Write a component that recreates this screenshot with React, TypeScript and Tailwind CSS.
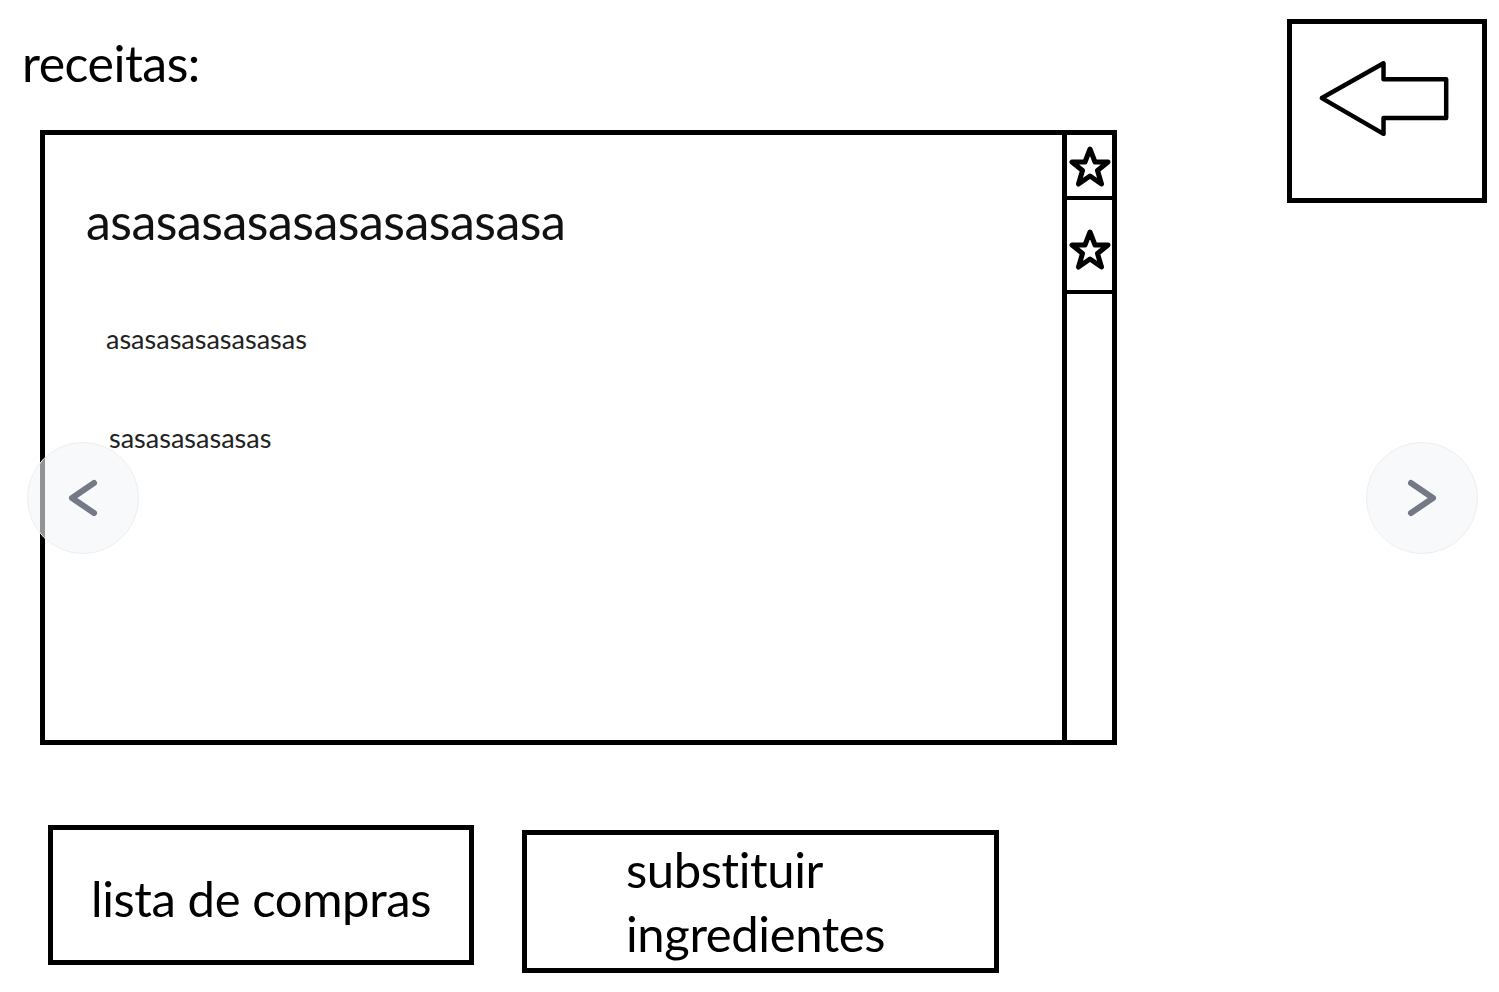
import React from "react";

const font = { fontFamily: "Lato, 'Open Sans', sans-serif" };

// hand-drawn style outlined star
const StarIcon = () => (
  <svg width="42" height="42" viewBox="0 0 42 42">
    <polygon
      points="21,3 26,16 39,16 28.5,24.5 32.5,38 21,30 9.5,38 13.5,24.5 3,16 16,16"
      fill="none"
      stroke="black"
      strokeWidth="5"
      strokeLinejoin="round"
    />
  </svg>
);

const BackArrow = () => (
  <svg width="191" height="175" viewBox="0 0 191 175">
    <polygon
      points="30,74 92,39 92,55 155,55 155,94 92,94 92,110"
      fill="none"
      stroke="black"
      strokeWidth="4.5"
      strokeLinejoin="round"
    />
  </svg>
);

const Chevron = ({ dir }: { dir: "left" | "right" }) => (
  <svg width="34" height="40" viewBox="0 0 34 40">
    <polyline
      points={dir === "left" ? "28,5 6,20 28,35" : "6,5 28,20 6,35"}
      fill="none"
      stroke="#737a86"
      strokeWidth="6"
      strokeLinecap="round"
      strokeLinejoin="round"
    />
  </svg>
);

const NavButton = ({ dir }: { dir: "left" | "right" }) => (
  <button
    className={`absolute top-[442px] w-[112px] h-[112px] rounded-full bg-[#f4f5f6]/60 border border-[#eceef0] flex items-center justify-center ${
      dir === "left" ? "left-[27px]" : "left-[1366px]"
    }`}
  >
    <Chevron dir={dir} />
  </button>
);

export default function App() {
  return (
    <div className="relative w-full h-[992px] bg-white flex text-black overflow-hidden" style={font}>
      {/* left column */}
      <div className="w-[1130px] flex flex-col">
        <h1 className="ml-[22px] mt-[33px] text-[50px] leading-[1.2] font-normal tracking-[-0.5px]">receitas:</h1>

        <div className="mt-[37px] ml-[40px] w-[1077px] h-[615px] border-[5px] border-black flex">
          <div className="flex-1 flex flex-col pl-[41px] pt-[56px]">
            <p className="text-[50px] leading-[1.2] tracking-[-0.5px] text-[#111]">asasasasasasasasasasa</p>
            <p className="mt-[72px] ml-[20px] text-[27px] leading-[1.2] text-[#222]">asasasasasasasas</p>
            <p className="mt-[67px] ml-[23px] text-[27px] leading-[1.2] text-[#222]">sasasasasasas</p>
          </div>
          <div className="w-[50px] border-l-[5px] border-black flex flex-col">
            <div className="h-[65px] border-b-4 border-black flex items-center justify-center pt-[3px]">
              <StarIcon />
            </div>
            <div className="h-[94px] border-b-4 border-black flex items-center justify-center pt-[10px]">
              <StarIcon />
            </div>
          </div>
        </div>

        <div className="mt-[80px] flex items-start">
          <button className="ml-[48px] w-[426px] h-[140px] border-[5px] border-black flex items-center pl-[38px] pt-[6px] text-[49px] leading-[1.2] tracking-[-0.4px]">
            lista de compras
          </button>
          <button className="ml-[48px] mt-[5px] w-[477px] h-[143px] border-[5px] border-black flex flex-col items-start justify-center pl-[99px] pt-[0px] text-[49px] leading-[1.3] tracking-[-0.4px] text-left">
            <span>substituir</span>
            <span>ingredientes</span>
          </button>
        </div>
      </div>

      {/* right column */}
      <div className="flex-1 flex justify-end items-start pt-[19px] pr-[12px]">
        <button className="w-[200px] h-[184px] border-[5px] border-black flex items-start justify-start">
          <BackArrow />
        </button>
      </div>

      <NavButton dir="left" />
      <NavButton dir="right" />
    </div>
  );
}
